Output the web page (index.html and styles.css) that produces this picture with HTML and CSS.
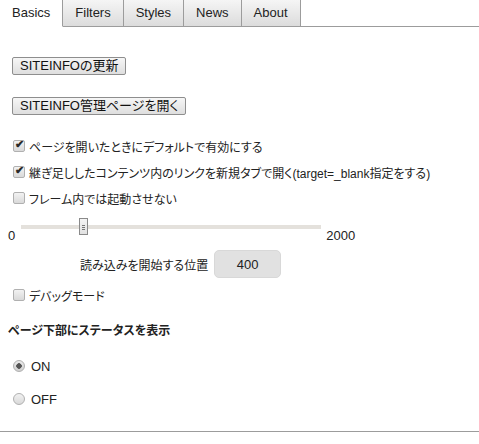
FILE: index.html
```html
<!DOCTYPE html>
<html lang="ja">
<head>
  <meta charset="UTF-8" />
  <title>Options</title>
  <link rel="stylesheet" href="styles.css">
</head>
<body>

<!-- タブ -->
<div class="tabs">
  <div class="tab active">Basics</div>
  <div class="tab">Filters</div>
  <div class="tab">Styles</div>
  <div class="tab">News</div>
  <div class="tab">About</div>
  <div class="tab-fill"></div>
</div>

<!-- 基本設定 -->
<div class="panel">
  <div class="btn-row"><button>SITEINFOの更新</button></div>
  <div class="btn-row"><button>SITEINFO管理ページを開く</button></div>

  <label class="row first"><input type="checkbox" checked> ページを開いたときにデフォルトで有効にする</label>
  <label class="row"><input type="checkbox" checked> 継ぎ足ししたコンテンツ内のリンクを新規タブで開く(target=_blank指定をする)</label>
  <label class="row"><input type="checkbox"> フレーム内では起動させない</label>

  <div class="range-row">
    <span class="range-label">0</span>
    <input type="range" min="0" max="2000" value="400">
    <span class="range-label">2000</span>
  </div>

  <div class="pos-row">
    <span>読み込みを開始する位置</span>
    <input class="num" type="text" value="400">
  </div>

  <label class="row debug"><input type="checkbox"> デバッグモード</label>

  <h3>ページ下部にステータスを表示</h3>
  <label class="row radio radio-on"><input type="radio" name="status" checked> ON</label>
  <label class="row radio radio-off"><input type="radio" name="status"> OFF</label>
</div>

<div class="bottom-line"></div>

</body>
</html>
```

FILE: styles.css
```css
* { box-sizing: border-box; }
body {
  font-family: 'Liberation Sans', 'Noto Sans CJK JP', sans-serif;
  font-feature-settings: "palt";
  font-size: 12px;
  color: #222;
  background-color: #fff;
  margin: 0;
}

/* タブ */
.tabs {
  display: flex;
  height: 27px;
  font-size: 13px;
}
.tab {
  padding: 0 12px;
  line-height: 26px;
  border-right: 1px solid #9c9c9c;
  border-bottom: 1px solid #9c9c9c;
  background: linear-gradient(#f5f5f5, #dcdcdc);
  color: #222;
}
.tab.active {
  background: #fff;
  border-bottom-color: #fff;
}
.tab-fill {
  flex: 1;
  border-bottom: 1px solid #9c9c9c;
}

.panel {
  padding: 30px 8px 0;
}

/* ボタン */
.btn-row {
  margin: 0 0 22px 4px;
  height: 18px;
}
button {
  font-family: inherit;
  font-feature-settings: "palt";
  font-size: 13px;
  height: 18px;
  line-height: 16px;
  padding: 0 7px;
  color: #111;
  border: 1px solid #8e8e8e;
  border-radius: 2px;
  background: linear-gradient(#f6f6f6, #dedede);
}

/* チェックボックス */
.row {
  display: flex;
  align-items: center;
  height: 26px;
}
.row.first { margin-top: -4px; }
input[type=checkbox],
input[type=radio] {
  -webkit-appearance: none;
  appearance: none;
  width: 12px;
  height: 12px;
  margin: 0 4px 0 5px;
  border: 1px solid #b0b0b0;
  background: linear-gradient(#f2f2f2, #d9d9d9);
  position: relative;
}
input[type=checkbox] {
  border-radius: 2px;
}
input[type=checkbox]:checked::before {
  content: "✔";
  position: absolute;
  left: 1px;
  top: -3px;
  font-size: 11px;
  font-weight: bold;
  color: #2a2a2a;
}
input[type=radio] {
  border-radius: 50%;
  margin-right: 6px;
}
input[type=radio]:checked {
  background: radial-gradient(circle, #555 0 2.5px, transparent 3px), linear-gradient(#eaeaea, #cfcfcf);
}
.row.radio {
  font-size: 13px;
}

/* スライダー */
.range-row {
  display: flex;
  align-items: flex-end;
  height: 25px;
  margin-top: 7px;
  font-size: 13px;
}
.range-label {
  line-height: 14px;
}
input[type=range] {
  -webkit-appearance: none;
  appearance: none;
  align-self: flex-start;
  width: 300px;
  height: 18px;
  margin: 0 5px 0 6px;
  background: transparent;
}
input[type=range]::-webkit-slider-runnable-track {
  height: 4px;
  background: #e4e1dc;
}
input[type=range]::-webkit-slider-thumb {
  -webkit-appearance: none;
  width: 9px;
  height: 17px;
  margin-top: -7px;
  border: 1px solid #8a8a8a;
  background:
    linear-gradient(#777, #777) 2px 6px / 3px 1px no-repeat,
    linear-gradient(#777, #777) 2px 8px / 3px 1px no-repeat,
    linear-gradient(#777, #777) 2px 10px / 3px 1px no-repeat,
    linear-gradient(#f4f4f4, #e2e2e2);
}

/* 位置 */
.pos-row {
  display: flex;
  align-items: center;
  gap: 6px;
  margin: 7px 0 0 72px;
  height: 28px;
}
.num {
  width: 67px;
  height: 28px;
  border: 1px solid #d8d8d8;
  border-radius: 5px;
  background: #e1e1e1;
  text-align: center;
  font-family: inherit;
  font-size: 13px;
  color: #222;
}

.row.debug { margin-top: 4px; }

h3 {
  font-size: 12px;
  font-weight: bold;
  line-height: 26px;
  margin: 10px 0 0;
}
.row.radio-on { margin-top: 9px; }
.row.radio-off { margin-top: 7px; }

.bottom-line {
  margin-top: 19px;
  border-top: 1px solid #9c9c9c;
}
```
